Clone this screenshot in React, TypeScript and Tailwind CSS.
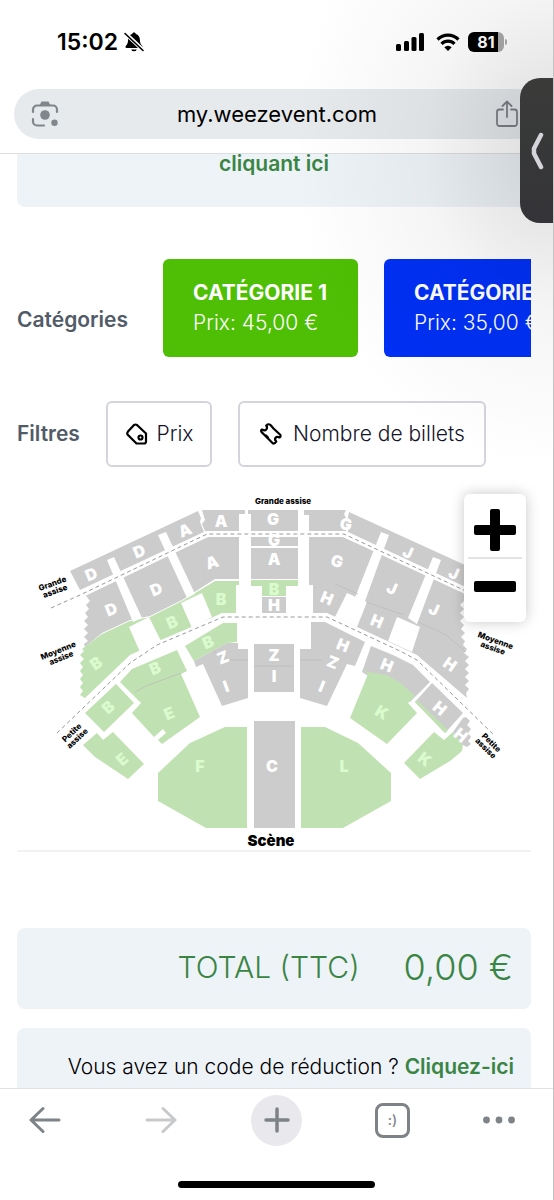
const GREY = '#cccccc';
const GREEN = '#c0e1b1';

const blocks = [
  // Grande assise
  { fill: GREY, points: '70,571 198,511 201,518 200,522 204,532 80,590' },
  { fill: GREY, points: '202,510 245,510 245,514 239,514 239,531 205,531 202,524 205,520' },
  { fill: GREY, points: '248,510 298,510 298,514 298,531 251,531 251,514 248,514' },
  { fill: GREY, points: '304,510 346,510 344,514 347,520 346,531 309,531 309,515 304,515' },
  { fill: GREY, points: '349,512 465,565 472,590 348,532 347,522' },
  // Moyenne assise, left
  {
    fill: GREY,
    points:
      '83,592 208,537 239,537 239,579 215,579 182,600 150,616 130,620 102,633 85,647 84,644 88,641 84,637 88,633 84,629 88,625 84,621 88,617 85,613 89,609 86,605 90,601 87,597',
  },
  {
    fill: GREEN,
    points:
      '215,581 239,581 239,585 236,585 236,613 222,613 130,655 85,698 80,695 83,691 80,687 83,683 80,679 83,675 80,671 83,667 80,663 84,659 80,655 84,651 82,649 102,634 130,621 150,617 182,601',
  },
  // Moyenne assise, centre
  { fill: GREY, points: '251,537 298,537 298,546 251,546' },
  { fill: GREY, points: '251,548 298,548 298,579 251,579' },
  { fill: GREEN, points: '251,580 298,580 298,586 286,586 286,596 262,596 262,586 251,586' },
  { fill: GREY, points: '262,597 286,597 286,613 262,613' },
  // Moyenne assise, right
  {
    fill: GREY,
    points:
      '309,537 343,537 472,594 464,601 460,605 464,609 460,613 464,617 460,621 464,625 461,629 465,633 461,637 465,641 463,645 467,649 464,653 469,657 465,661 469,665 465,669 469,673 465,677 469,681 465,685 469,689 466,693 467,698 417,655 400,647 327,613 313,613 313,585 309,585',
  },
  // Petite assise
  { fill: GREEN, points: '120,682 132,669 177,650 187,671 181,674 200,717 162,744 158,740 166,733 163,729 154,737 132,713 141,703' },
  { fill: GREEN, points: '185,646 223,623 237,623 237,642 227,643 194,661' },
  { fill: GREY, points: '194,661 227,643 238,643 238,649 248,649 248,698 222,706 203,664 196,667' },
  { fill: GREY, points: '254,644 294,644 294,692 254,692' },
  { fill: GREY, points: '311,622 325,622 365,642 355,666 347,664 327,706 300,698 300,649 311,649' },
  { fill: GREY, points: '371,646 393,655 413,665 430,682 410,702 362,672' },
  { fill: GREEN, points: '362,669 368,672 387,675 402,684 415,696 408,703 417,713 387,744 350,718 368,674' },
  { fill: GREEN, points: '116,684 134,703 104,732 85,713' },
  { fill: GREEN, points: '83,745 97,733 103,740 113,732 144,764 128,779 95,757' },
  { fill: GREY, points: '432,683 463,713 445,733 415,702' },
  { fill: GREEN, points: '415,702 417,700 448,730 445,733' },
  { fill: GREEN, points: '404,763 434,732 444,740 453,732 463,744 462,751 450,761 420,779' },
  { fill: GREY, points: '453,732 463,718 466,717 470,721 467,725 471,729 468,733 471,737 468,741 471,744 467,747 463,745' },
  // Orchestra
  { fill: GREEN, points: '158,773 190,743 225,727 247,727 247,828 206,828 158,801' },
  { fill: GREY, points: '254,721 295,721 295,828 254,828' },
  { fill: GREEN, points: '301,727 325,727 358,743 391,773 391,801 343,828 301,828' },
];

const aisles = [
  '107,560 114,557 142,618 133,622',
  '129,627 149,617 162,643 140,652',
  '158,535 166,532 195,594 187,598',
  '181,603 202,593 212,617 192,628',
  '381,532 389,535 364,604 354,600',
  '347,593 367,602 357,627 335,617',
  '433,557 441,560 417,624 408,618',
  '397,617 420,627 412,652 388,641',
];

const seams = [
  'M135 692 L146 686 L181 673',
  'M213 651 L230 660 H248',
  'M254 666 H294',
  'M300 660 H322',
  'M335 584 L358 594',
  'M366 602 L404 615',
  'M418 622 L446 635 L466 652',
];

type Letter = [text: string, x: number, y: number, rotate: number, open?: boolean];

const letters: Letter[] = [
  ['D', 91, 574, -22], ['D', 139, 551, -22], ['A', 185, 530, -22], ['A', 221, 521, 0],
  ['G', 273, 519, 0], ['G', 346, 524, 10], ['J', 408, 552, 24], ['J', 454, 573, 24],
  ['D', 111, 609, -22], ['D', 156, 589, -22], ['A', 212, 562, -18], ['G', 274, 540, 0],
  ['A', 274, 559, 0], ['G', 337, 561, 18], ['J', 392, 588, 24], ['J', 434, 609, 24],
  ['B', 221, 599, 0, true], ['B', 274, 589, 0, true], ['H', 274, 605, 0], ['H', 327, 598, 22],
  ['H', 377, 621, 22], ['B', 172, 622, -22, true], ['B', 96, 663, -35, true], ['H', 450, 664, 35],
  ['B', 155, 668, -22, true], ['B', 208, 642, -22, true], ['Z', 223, 657, -22], ['I', 226, 686, -20],
  ['Z', 274, 655, 0], ['I', 274, 676, 0], ['H', 343, 645, 22], ['Z', 333, 662, 22],
  ['I', 322, 686, 22], ['H', 387, 665, 22], ['K', 382, 712, 30, true], ['E', 169, 713, -22, true],
  ['B', 108, 707, -42, true], ['E', 122, 759, -42, true], ['H', 440, 708, 40], ['H', 461, 735, 40],
  ['K', 425, 759, 38, true], ['F', 200, 766, 0, true], ['C', 272, 766, 0], ['L', 344, 766, 0, true],
];

const tierLabels = [
  { lines: ['Grande', 'assise'], x: 54, y: 588, rotate: -20 },
  { lines: ['Moyenne', 'assise'], x: 60, y: 655, rotate: -22 },
  { lines: ['Petite', 'assise'], x: 75, y: 736, rotate: -43 },
  { lines: ['Moyenne', 'assise'], x: 494, y: 645, rotate: 20 },
  { lines: ['Petite', 'assise'], x: 488, y: 746, rotate: 45 },
];

function SeatingMap() {
  return (
    <svg viewBox="17 486 514 364" className="block w-full" role="img" aria-label="Plan de salle">
      {blocks.map((b) => (
        <polygon key={b.points} points={b.points} fill={b.fill} />
      ))}
      {aisles.map((points) => (
        <polygon key={points} points={points} fill="#fff" />
      ))}
      <g fill="none" stroke="#bdbdbd" strokeWidth="0.8">
        {seams.map((d) => (
          <path key={d} d={d} />
        ))}
      </g>
      <g fill="none" stroke="#fff" strokeWidth="6">
        <path d="M76 597 L207 534 H344 L470 593" />
        <path d="M57 733 L130 663 L157 645 L223 617 H327 L400 651 L417 660 L495 736" />
      </g>
      <g fill="none" stroke="#9a9a9a" strokeWidth="1" strokeDasharray="4 3">
        <path d="M51 608 L80 595 L207 534 H344 L470 593" />
        <path d="M57 733 L130 663 L157 645 L223 617 H327 L400 651 L417 660 L495 736" />
      </g>
      <g className="font-['Inter',sans-serif] text-[16px] font-black" textAnchor="middle">
        {letters.map(([text, x, y, rotate, open]) => (
          <text
            key={`${text}-${x}-${y}`}
            x={x}
            y={y + 6}
            transform={`rotate(${rotate} ${x} ${y})`}
            fill={open ? '#d9fbcd' : '#ffffff'}
          >
            {text}
          </text>
        ))}
      </g>
      <g className="font-['Inter',sans-serif] text-[8px] font-extrabold" textAnchor="middle" fill="#000">
        <text x="283" y="504">Grande assise</text>
        {tierLabels.map(({ lines, x, y, rotate }) => (
          <g key={x} transform={`rotate(${rotate} ${x} ${y})`}>
            <text x={x} y={y - 2}>{lines[0]}</text>
            <text x={x} y={y + 6}>{lines[1]}</text>
          </g>
        ))}
      </g>
      <text x="271" y="846" textAnchor="middle" className="font-['Inter',sans-serif] text-[15px] font-black">
        Scène
      </text>
    </svg>
  );
}

function BellOffIcon() {
  return (
    <svg viewBox="0 0 20 20" className="h-5 w-5">
      <path d="M10 0.500c1 0 1.700.6 1.900 1.500 2.600.8 3.900 3 4 5.800.1 3.400.8 4.700 2.300 6.200.8.900.3 2-.8 2H2.600c-1.100 0-1.600-1.100-.8-2C3.300 12.500 4 11.200 4.100 7.800c.1-2.800 1.400-5 4-5.800.2-.9.900-1.500 1.900-1.500z" />
      <path d="M7.200 17.500h5.600a2.900 2.500 0 0 1-5.600 0z" />
      <path d="M1 1 20 19" stroke="#fff" strokeWidth="4" />
      <path d="M1 1.500 19 18.500" stroke="#000" strokeWidth="1.600" strokeLinecap="round" />
    </svg>
  );
}

function LensIcon() {
  return (
    <svg viewBox="0 0 28 28" className="h-7 w-7" fill="none" stroke="#80868b" strokeWidth="2.2" strokeLinecap="round">
      <path d="M2 12V9.500a4 4 0 0 1 4-4h16a4 4 0 0 1 4 4V12" />
      <path d="M2 19v2.500a4 4 0 0 0 4 4h7" />
      <path d="M8.500 5.500 10.500 1.500h7l2 4z" fill="#80868b" stroke="none" />
      <circle cx="14" cy="15" r="4.800" fill="#80868b" stroke="none" />
      <circle cx="23.500" cy="22.800" r="3.200" fill="#80868b" stroke="none" />
    </svg>
  );
}

function ShareIcon() {
  return (
    <svg viewBox="0 0 24 28" className="h-7 w-6" fill="none" stroke="#7d8186" strokeWidth="1.800" strokeLinecap="round" strokeLinejoin="round">
      <path d="M8 9.500H4.500A2.500 2.500 0 0 0 2 12v11.500A2.500 2.500 0 0 0 4.500 26h15a2.500 2.500 0 0 0 2.500-2.500V12a2.500 2.500 0 0 0-2.500-2.500H16" />
      <path d="M12 17V2M7.500 6 12 1.500 16.500 6" />
    </svg>
  );
}

function TagIcon() {
  return (
    <svg viewBox="0 0 24 24" className="h-6 w-6 shrink-0" fill="none" stroke="#000" strokeWidth="2.2" strokeLinejoin="round">
      <path d="M9 3q1.500-1 3 0l9 8.500v8a2 2 0 0 1-2 2h-7.500L2.500 12.500q-.8-1.500.5-3z" />
      <circle cx="15.500" cy="15.500" r="2" />
    </svg>
  );
}

function TicketIcon() {
  return (
    <svg viewBox="0 0 24 24" className="h-6 w-6 shrink-0" fill="none" stroke="#000" strokeWidth="2.200" strokeLinejoin="round" strokeLinecap="round">
      <path d="M8.500 2.500Q10 1.800 11.500 3L14.500 6.500 21.500 13Q22 14.500 20.500 15.500 18 14 16.500 15.800 15.300 17.800 17.300 19.500 16 21.800 14 21.500L9.500 17 2.500 10Q1.500 8.500 3 7.500 5.800 9.200 7.500 7.200 8.800 5 7.200 3.600z" />
      <path d="M7 13.500l2 2" />
    </svg>
  );
}

function StatusBar() {
  return (
    <div className="flex h-[89px] items-start justify-between pl-[57px] pr-[46px] pt-[26px]">
      <div className="flex h-8 items-center gap-1.5">
        <span className="text-[23px] font-semibold leading-8">15:02</span>
        <BellOffIcon />
      </div>
      <div className="flex h-8 items-center gap-2">
        <svg viewBox="0 0 28 18" className="h-[18px] w-7">
          <rect x="0" y="11" width="5" height="7" rx="1.500" />
          <rect x="8" y="8" width="5" height="10" rx="1.500" />
          <rect x="15.500" y="4" width="5" height="14" rx="1.500" />
          <rect x="23" y="0" width="5" height="18" rx="1.500" />
        </svg>
        <svg viewBox="0 0 24 18" className="ml-1 h-[18px] w-6" fill="none" stroke="#000" strokeWidth="3.200">
          <path d="M1.500 6.500a15 15 0 0 1 21 0" />
          <path d="M5.500 10.800a9.200 9.200 0 0 1 13 0" />
          <path d="M12 18 8.300 14.300a5.200 5.200 0 0 1 7.400 0z" fill="#000" stroke="none" />
        </svg>
        <div className="flex items-center gap-px">
          <div className="flex h-5 w-[36px] items-center justify-center rounded-md bg-[linear-gradient(90deg,#000_82%,#aaa_82%)] text-base font-bold leading-5 text-white">
            81
          </div>
          <div className="h-1.5 w-0.5 rounded-r bg-[#aaa]" />
        </div>
      </div>
    </div>
  );
}

function Category({ name, price, className }: { name: string; price: string; className: string }) {
  return (
    <button className={`h-[98px] w-[195px] shrink-0 rounded-md px-[30px] text-left text-[21px] leading-[30px] text-white ${className}`}>
      <span className="block whitespace-nowrap font-bold">{name}</span>
      <span className="block whitespace-nowrap font-light">Prix: {price}</span>
    </button>
  );
}

export default function App() {
  return (
    <div className="relative flex h-screen flex-col overflow-hidden border-r border-[#c4c4c4] bg-white font-['Inter',sans-serif] text-black">
      <header className="border-b border-[#dcdee0]">
        <StatusBar />
        <div className="mb-3.5 ml-3.5 mr-2.5 flex h-[50px] items-center justify-between rounded-full bg-[#e7eaed] pl-[17px] pr-6">
          <button aria-label="Rechercher avec l'appareil photo"><LensIcon /></button>
          <span className="text-[22px] leading-8">my.weezevent.com</span>
          <button aria-label="Partager"><ShareIcon /></button>
        </div>
      </header>

      <main className="min-h-0 flex-1 overflow-hidden pl-[17px] pr-[22px]">
        <div className="flex h-[53px] justify-center rounded-b-lg bg-[#eef3f8]">
          <a href="#ici" className="text-[21px] font-semibold leading-5 text-[#3a8544]">cliquant ici</a>
        </div>

        <section className="mt-[52px] flex overflow-hidden">
          <h2 className="w-[146px] shrink-0 pt-[46px] text-[21px] font-semibold leading-[30px] text-[#525b68]">Catégories</h2>
          <div className="flex gap-[26px]">
            <Category name="CATÉGORIE 1" price="45,00 €" className="bg-[#4ebf04]" />
            <Category name="CATÉGORIE 2" price="35,00 €" className="bg-[#0030f5]" />
          </div>
        </section>

        <section className="mt-11 flex items-center">
          <h2 className="w-[89px] text-[21px] font-semibold leading-[30px] text-[#525b68]">Filtres</h2>
          <button className="flex h-[66px] w-[106px] items-center justify-center gap-2 rounded-md border-2 border-[#d3d4dc] text-[21px] font-light text-[#14142b]">
            <TagIcon />
            Prix
          </button>
          <button className="ml-[26px] flex h-[66px] w-[248px] items-center justify-center gap-2.5 whitespace-nowrap rounded-md border-2 border-[#d3d4dc] text-[21px] font-light text-[#14142b]">
            <TicketIcon />
            Nombre de billets
          </button>
        </section>

        <section className="relative mt-[19px] border-b-2 border-[#f2f2f2]">
          <SeatingMap />
          <div className="absolute right-[5px] top-2 flex h-32 w-[62px] flex-col items-center rounded-md bg-white px-1 shadow-[0_0_14px_rgba(0,0,0,0.22)]">
            <button aria-label="Zoom avant" className="flex h-[65px] w-full items-center justify-center border-b-2 border-[#e4e4e4] pt-2">
              <svg viewBox="0 0 42 42" className="h-[42px] w-[42px]">
                <rect x="0" y="16" width="42" height="10" rx="2" />
                <rect x="16" y="0" width="10" height="42" rx="2" />
              </svg>
            </button>
            <button aria-label="Zoom arrière" className="flex h-[55px] w-full items-center justify-center">
              <svg viewBox="0 0 42 42" className="h-[42px] w-[42px]">
                <rect x="0" y="15" width="42" height="11" rx="2" />
              </svg>
            </button>
          </div>
        </section>

        <div className="mt-[76px] flex h-[81px] items-center justify-end gap-11 rounded-lg bg-[#eef3f8] pb-1 pr-[18px] font-light text-[#3a8544]">
          <span className="text-[30px] leading-10">TOTAL (TTC)</span>
          <span className="text-[36px] leading-10">0,00 €</span>
        </div>

        <div className="mt-[19px] h-[80px] rounded-lg bg-[#eef3f8] pr-[17px] pt-6 text-right text-[21px] font-light leading-[30px]">
          Vous avez un code de réduction ? <a href="#code" className="font-semibold text-[#3a8544]">Cliquez-ici</a>
        </div>
      </main>

      <footer className="border-t border-[#dfe1e4] bg-white">
        <nav className="mt-1 flex h-[54px] items-center justify-between pl-[19px] pr-[38px]">
          <button aria-label="Retour" className="flex w-[51px] justify-center">
            <svg viewBox="0 0 32 28" className="h-7 w-8" fill="none" stroke="#7d8387" strokeWidth="3" strokeLinecap="round" strokeLinejoin="round">
              <path d="M30 14H2M14 2.500 2 14l12 11.500" />
            </svg>
          </button>
          <button aria-label="Suivant" disabled className="flex w-[51px] justify-center">
            <svg viewBox="0 0 32 28" className="h-7 w-8" fill="none" stroke="#c8c9ca" strokeWidth="3" strokeLinecap="round" strokeLinejoin="round">
              <path d="M2 14h28M18 2.500 30 14 18 25.500" />
            </svg>
          </button>
          <button aria-label="Nouvel onglet" className="flex h-[51px] w-[51px] items-center justify-center rounded-full bg-[#e9e9ed]">
            <svg viewBox="0 0 26 26" className="h-[26px] w-[26px]" stroke="#7d8387" strokeWidth="3.500" strokeLinecap="round">
              <path d="M13 2v22M2 13h22" />
            </svg>
          </button>
          <button aria-label="Onglets" className="flex w-[51px] justify-center">
            <span className="flex h-[35px] w-[35px] items-center justify-center rounded-lg border-3 border-[#7d8387] text-sm font-medium text-[#7d8387]">
              :)
            </span>
          </button>
          <button aria-label="Plus">
            <svg viewBox="0 0 32 8" className="h-2 w-8" fill="#7d8387">
              <circle cx="3.500" cy="4" r="3.400" />
              <circle cx="16" cy="4" r="3.400" />
              <circle cx="28.500" cy="4" r="3.400" />
            </svg>
          </button>
        </nav>
        <div className="mx-auto mb-3 mt-[34px] h-[7px] w-[197px] rounded-full bg-black" />
      </footer>

      {/* Shade cast by the side drawer */}
      <div className="pointer-events-none absolute inset-0 bg-[radial-gradient(ellipse_260px_320px_at_100%_150px,rgba(0,0,0,0.14),rgba(0,0,0,0.04)_50%,transparent)]" />
      <button
        aria-label="Ouvrir le panneau"
        className="absolute -right-px top-[78px] flex h-[145px] w-[34px] items-center justify-center rounded-l-[20px] bg-linear-to-b from-[#3a3b39] to-[#343438]"
      >
        <svg viewBox="0 0 14 40" className="h-10 w-3.5" fill="none" stroke="#d4d4da" strokeWidth="4.500" strokeLinecap="round" strokeLinejoin="round">
          <path d="M11 4 4 17.500v5L11 36" />
        </svg>
      </button>
    </div>
  );
}
